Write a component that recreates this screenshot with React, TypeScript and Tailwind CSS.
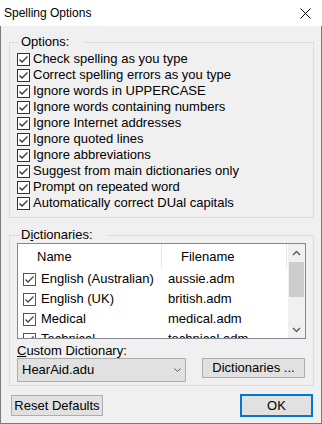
import React from "react";

const options = [
  "Check spelling as you type",
  "Correct spelling errors as you type",
  "Ignore words in UPPERCASE",
  "Ignore words containing numbers",
  "Ignore Internet addresses",
  "Ignore quoted lines",
  "Ignore abbreviations",
  "Suggest from main dictionaries only",
  "Prompt on repeated word",
  "Automatically correct DUal capitals",
];

const dicts = [
  ["English (Australian)", "aussie.adm"],
  ["English (UK)", "british.adm"],
  ["Medical", "medical.adm"],
  ["Technical", "technical.adm"],
];

function Check({ border = "#333333", mark = "#333333" }: { border?: string; mark?: string }) {
  return (
    <svg width="13" height="13" viewBox="0 0 13 13" className="shrink-0">
      <rect x="0.5" y="0.5" width="12" height="12" fill="#ffffff" stroke={border} />
      <path d="M2.5 6.5 L5 9 L10.5 3.5" fill="none" stroke={mark} strokeWidth="1.3" />
    </svg>
  );
}

function Chevron({ up }: { up?: boolean }) {
  return (
    <svg width="9" height="6" viewBox="0 0 9 6">
      <path
        d={up ? "M1 5 L4.5 1.5 L8 5" : "M1 1 L4.5 4.5 L8 1"}
        fill="none"
        stroke="#606060"
        strokeWidth="1.5"
      />
    </svg>
  );
}

export default function App() {
  return (
    <div className="w-[322px] h-[424px] font-['Liberation_Sans',Arial,sans-serif] text-[13px] text-black">
      <div className="h-[26px] bg-white flex items-center justify-between pl-[4px] pr-[11px]">
        <span className="text-[12px] leading-4">Spelling Options</span>
        <svg width="11" height="11" viewBox="0 0 11 11">
          <path d="M0.5 0.5 L10.5 10.5 M10.5 0.5 L0.5 10.5" stroke="#000" strokeWidth="1" />
        </svg>
      </div>
      <div className="h-[398px] bg-[#f0f0f0] border-x border-b border-[#7a7a7a] flex flex-col">
        <fieldset className="mt-[8px] ml-[8px] w-[305px] border border-[#dcdcdc]">
          <legend className="ml-[9px] pl-[2px] pr-[14px] leading-4">Options:</legend>
          <div className="pt-[1px] pb-[6px] pl-[7px] flex flex-col">
            {options.map((o) => (
              <div key={o} className="h-4 flex items-center">
                <Check />
                <span className="ml-[3px] leading-4 whitespace-nowrap">{o}</span>
              </div>
            ))}
          </div>
        </fieldset>
        <fieldset className="mt-[9px] ml-[8px] w-[305px] border border-[#dcdcdc]">
          <legend className="ml-[9px] pl-[2px] pr-[14px] leading-4">
            D<span className="underline">i</span>ctionaries:
          </legend>
          <div className="pl-[7px] pb-[3px] flex flex-col">
            <div className="w-[289px] h-[96px] border border-[#828790] bg-white flex overflow-hidden">
              <div className="flex-1 flex flex-col">
                <div className="h-[24px] shrink-0 flex">
                  <div className="w-[144px] border-r border-[#e5e5e5] pl-[19px] pt-[5px] leading-4">Name</div>
                  <div className="w-[125px] border-r border-[#e5e5e5] pl-[19px] pt-[5px] leading-4">Filename</div>
                </div>
                {dicts.map(([n, f]) => (
                  <div key={n} className="h-[20px] shrink-0 flex items-center pt-[2px]">
                    <div className="w-[144px] pl-[5px] flex items-center">
                      <Check border="#555555" mark="#444444" />
                      <span className="ml-[5px] leading-4 whitespace-nowrap">{n}</span>
                    </div>
                    <div className="w-[125px] pl-[6px] leading-4 whitespace-nowrap">{f}</div>
                  </div>
                ))}
              </div>
              <div className="w-[17px] shrink-0 bg-[#f0f0f0] flex flex-col">
                <div className="h-[17px] flex items-center justify-center pt-[1px]">
                  <Chevron up />
                </div>
                <div className="mt-[1px] mx-[1px] h-[35px] bg-[#cdcdcd]" />
                <div className="flex-1" />
                <div className="h-[17px] flex items-center justify-center">
                  <Chevron />
                </div>
              </div>
            </div>
            <div className="mt-[4px] leading-[15px]">
              <span className="underline">C</span>ustom Dictionary:
            </div>
            <div className="flex items-start">
              <div className="w-[169px] h-[24px] bg-[#e1e1e1] border border-[#adadad] flex items-center justify-between pl-[4px] pr-[4px]">
                <span className="leading-4">HearAid.adu</span>
                <svg width="7" height="4" viewBox="0 0 7 4">
                  <path d="M0.5 0.5 L3.5 3.5 L6.5 0.5" fill="none" stroke="#555" strokeWidth="1" />
                </svg>
              </div>
              <div className="ml-[16px] w-[103px] h-[20px] bg-[#e1e1e1] border border-[#adadad] flex items-center justify-center leading-4">
                Dictionaries ...
              </div>
            </div>
          </div>
        </fieldset>
        <div className="mt-[8px] h-[23px] flex items-center justify-between ml-[10px] mr-[8px]">
          <div className="w-[92px] h-[21px] bg-[#e1e1e1] border border-[#adadad] flex items-center justify-center leading-4 whitespace-nowrap">
            Reset Defaults
          </div>
          <div className="w-[73px] h-[23px] bg-[#e1e1e1] border-2 border-[#0078d7] flex items-center justify-center leading-4">
            OK
          </div>
        </div>
      </div>
    </div>
  );
}
